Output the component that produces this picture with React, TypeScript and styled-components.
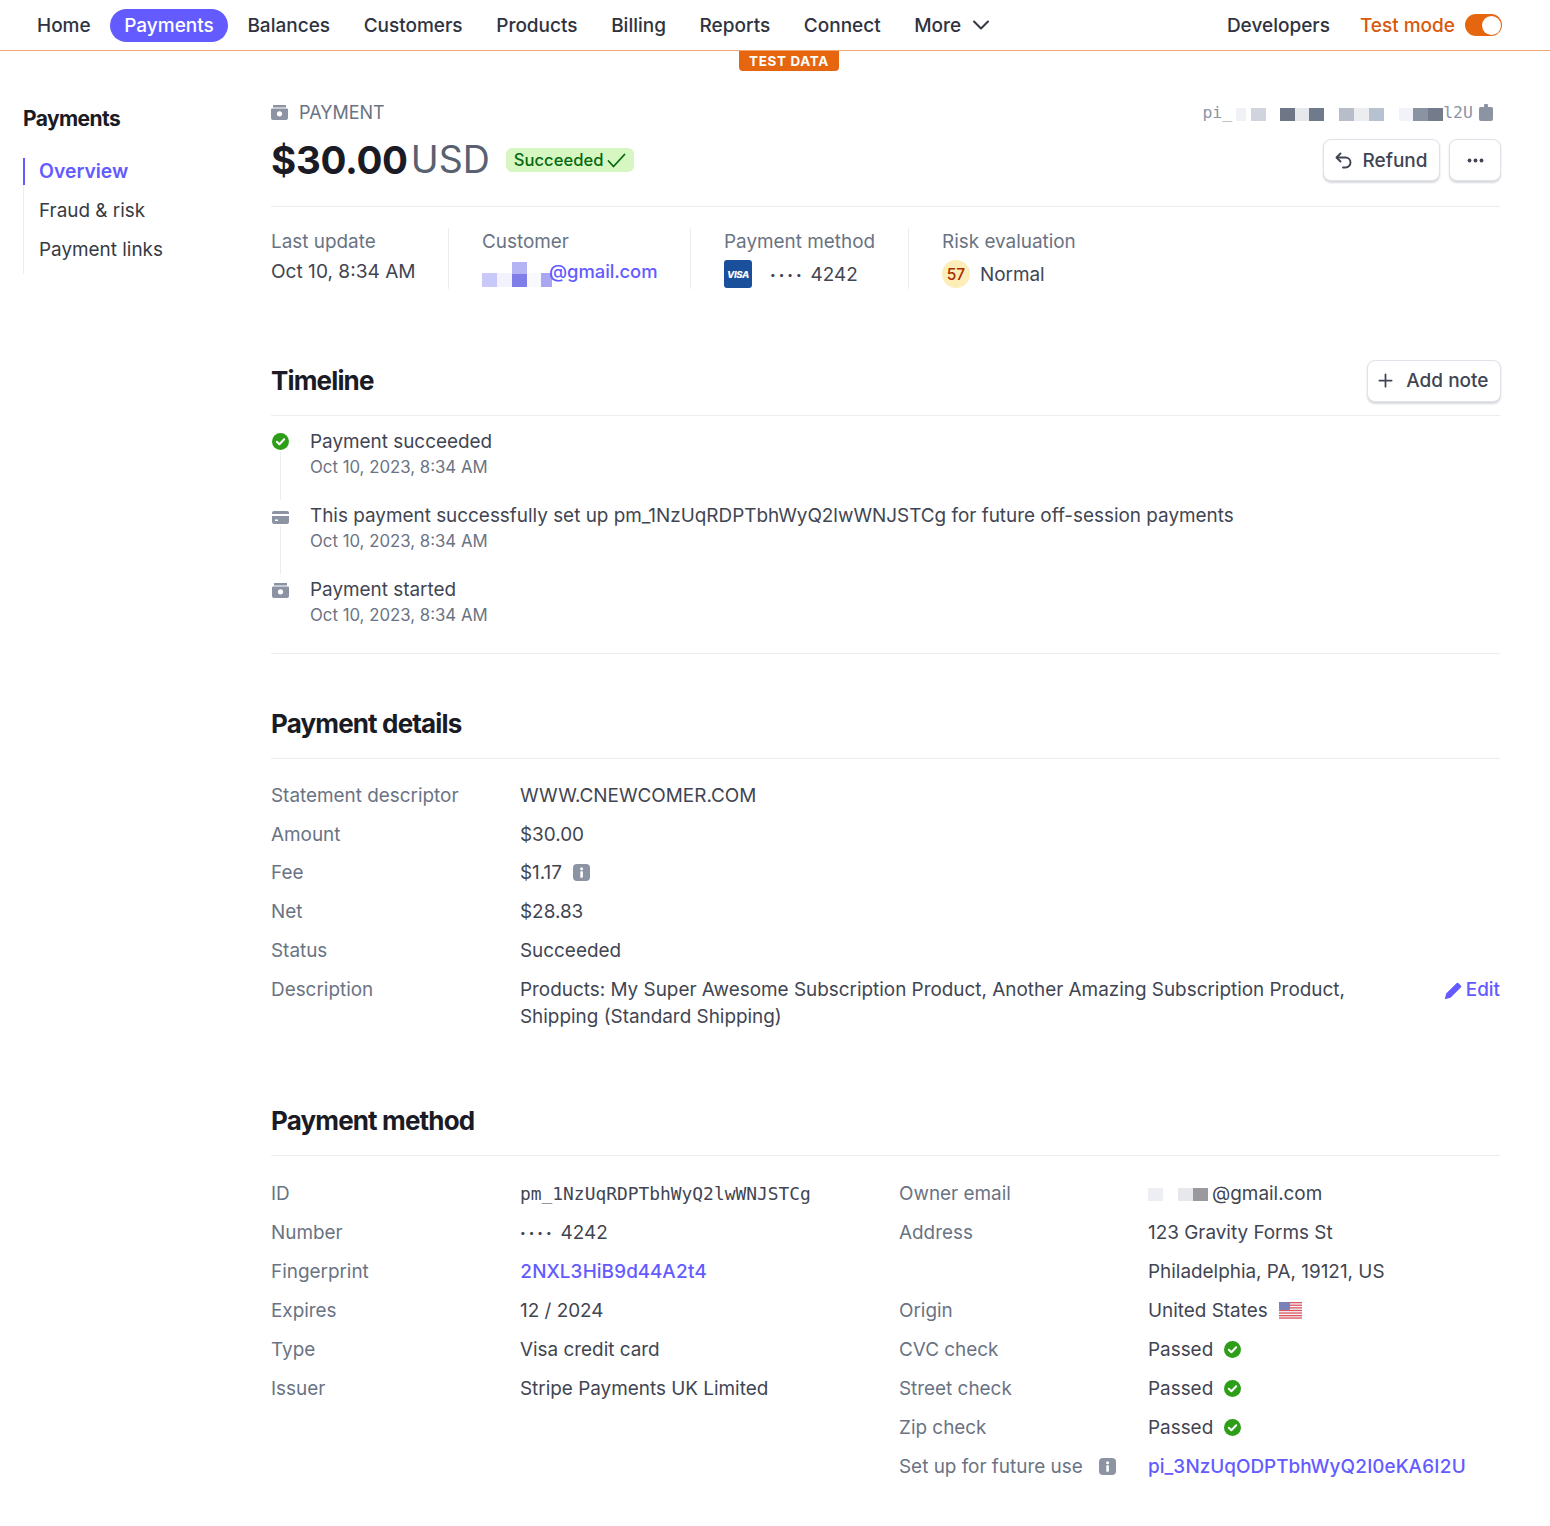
import React from 'react'
import styled, { createGlobalStyle } from 'styled-components'
import { ChevronDown, Plus } from 'lucide-react'

const GlobalStyle = createGlobalStyle`
  html, body {
    margin: 0;
    padding: 0;
    background: #fff;
    font-family: Inter, "Noto Sans", sans-serif;
    color: #414552;
    font-size: 18.9px;
    line-height: 27px;
  }
`

const purple = '#635bff'
const orange = '#e5660f'

const TopBar = styled.header`
  height: 50px;
  border-bottom: 1.5px solid #f2a672;
  display: flex;
  align-items: center;
  justify-content: space-between;
  padding: 0 48px 0 23px;
  position: relative;
  box-sizing: content-box;
`

const NavList = styled.nav`
  display: flex;
  align-items: center;
  gap: 5.6px;
`

const NavItem = styled.a<{ $active?: boolean }>`
  display: flex;
  align-items: center;
  gap: 6px;
  height: 33px;
  padding: 0 14px;
  border-radius: 17px;
  font-weight: 500;
  font-size: 19px;
  background: ${(p) => (p.$active ? purple : 'transparent')};
  color: ${(p) => (p.$active ? '#fff' : '#2f3340')};
`

const NavRight = styled.div`
  display: flex;
  align-items: center;
`

const NavPlain = styled.span`
  font-weight: 500;
  font-size: 19px;
  color: #2f3340;
  margin-right: 30px;
`

const TestLabel = styled.span`
  font-weight: 500;
  font-size: 19px;
  color: #d8590b;
  margin-right: 10px;
`

const Toggle = styled.span`
  width: 37px;
  height: 22px;
  border-radius: 11px;
  background: ${orange};
  position: relative;
  display: block;

  &::after {
    content: '';
    position: absolute;
    top: 1.5px;
    right: 1.5px;
    width: 19px;
    height: 19px;
    border-radius: 50%;
    background: #fff;
  }
`

const TestBadge = styled.span`
  position: absolute;
  left: 739px;
  top: 51px;
  width: 100px;
  height: 20px;
  background: ${orange};
  border-radius: 0 0 4px 4px;
  color: #fff;
  font-size: 13.4px;
  font-weight: 700;
  line-height: 21px;
  letter-spacing: 0.7px;
  text-align: center;
`

const Layout = styled.div`
  display: flex;
  padding: 0 50px 0 23px;
  height: 1474px;
`

const Side = styled.aside`
  width: 248px;
  flex: none;
  padding-top: 54px;
`

const SideTitle = styled.h2`
  margin: 0 0 25px;
  font-size: 21px;
  line-height: 28px;
  font-weight: 700;
  letter-spacing: -0.6px;
  color: #1a1b25;
`

const SideList = styled.div`
  border-left: 1.5px solid #ebeef1;
  padding-bottom: 11px;
  display: flex;
  flex-direction: column;
  gap: 12px;
`

const SideItem = styled.a<{ $active?: boolean }>`
  height: 27px;
  display: flex;
  align-items: center;
  padding-left: 14.5px;
  margin-left: -1.5px;
  border-left: 2.5px solid ${(p) => (p.$active ? purple : 'transparent')};
  font-size: ${(p) => (p.$active ? 19.4 : 18.9)}px;
  font-weight: ${(p) => (p.$active ? 600 : 400)};
  color: ${(p) => (p.$active ? purple : '#353a44')};
`

const Main = styled.main`
  flex: 1;
  min-width: 0;
`

const HeadTop = styled.div`
  display: flex;
  justify-content: space-between;
  align-items: center;
  padding-top: 48px;
  height: 27px;
  box-sizing: content-box;
`

const Eyebrow = styled.div`
  display: flex;
  align-items: center;
  gap: 11px;
  font-size: 18px;
  color: #6a7383;
`

const Identifier = styled.div`
  display: flex;
  align-items: center;
  font-family: "DejaVu Sans Mono", "Liberation Mono", monospace;
  font-size: 16.5px;
  color: #8c94a3;
  padding-right: 7px;
`

const IdentifierGap = styled.span`
  width: 6px;
`

const Mosaic = styled.span<{ $h: number; $y: number }>`
  display: inline-flex;
  align-items: stretch;
  height: ${(p) => p.$h}px;
  margin-top: ${(p) => p.$y}px;
`

const Tile = styled.span<{ $w: number; $c: string; $up?: number }>`
  display: block;
  width: ${(p) => p.$w}px;
  background: ${(p) => p.$c};
  margin-top: ${(p) => p.$up ?? 0}px;
`

const TitleRow = styled.div`
  display: flex;
  justify-content: space-between;
  align-items: center;
  margin-top: 12px;
  height: 44px;
  padding-bottom: 24px;
  border-bottom: 1.5px solid #ebeef1;
  box-sizing: content-box;
`

const AmountGroup = styled.div`
  display: flex;
  align-items: center;
`

const Amount = styled.span`
  font-size: 38.5px;
  line-height: 44px;
  font-weight: 700;
  letter-spacing: -0.3px;
  color: #1a1b25;
`

const Currency = styled.span`
  font-size: 37.5px;
  line-height: 44px;
  margin-left: 3px;
  color: #596171;
`

const StatusPill = styled.span`
  margin-left: 16px;
  height: 24px;
  display: inline-flex;
  align-items: center;
  gap: 4px;
  padding: 0 8px;
  border-radius: 6px;
  background: #d7f7c2;
  color: #05690d;
  font-size: 16.6px;
  font-weight: 500;
`

const ButtonRow = styled.div`
  display: flex;
  gap: 9px;
  margin-right: -1px;
`

const Button = styled.button<{ $wide?: boolean }>`
  height: 42px;
  display: flex;
  align-items: center;
  gap: 10px;
  padding: 0 ${(p) => (p.$wide ? 16.5 : 11.5)}px;
  background: #fff;
  border: 1px solid #dfe2e8;
  border-radius: 8px;
  box-shadow: 0 1.5px 2px rgba(60, 66, 87, 0.2);
  font: 500 19px/27px Inter, sans-serif;
  color: #414552;
`

const AddNoteButton = styled(Button)`
  padding-left: 7.5px;
`

const Summary = styled.div`
  display: flex;
  padding-top: 21px;
  height: 61px;
  box-sizing: content-box;
`

const SummaryCell = styled.div<{ $w: number }>`
  width: ${(p) => p.$w}px;
  flex: none;
  box-sizing: border-box;
  border-right: 1.5px solid #ebeef1;

  & + & {
    padding-left: 33px;
  }

  &:last-child {
    border-right: 0;
  }
`

const MutedLabel = styled.div`
  color: #6a7383;
  line-height: 27px;
`

const SummaryValue = styled.div<{ $drop?: number; $size?: number }>`
  display: flex;
  align-items: center;
  height: 32px;
  margin-top: ${(p) => p.$drop ?? 0}px;
  font-size: ${(p) => p.$size ?? 18.9}px;
  color: #414552;
`

const LinkText = styled.a`
  color: ${purple};
  font-weight: 500;
  font-variant-numeric: tabular-nums;
`

const CustomerLink = styled(LinkText)`
  margin-left: -3px;
  font-size: 18.4px;
`

const CardDots = styled.span`
  font-size: 10px;
  letter-spacing: 3px;
  margin-right: 6px;
  color: #414552;
`

const VisaMark = styled.span`
  width: 28px;
  height: 28px;
  border-radius: 3px;
  background: #1a4f9c;
  color: #fff;
  font-size: 9.5px;
  font-weight: 800;
  font-style: italic;
  letter-spacing: -0.3px;
  display: flex;
  align-items: center;
  justify-content: center;
  margin-right: 18px;
`

const ScoreDot = styled.span`
  width: 28px;
  height: 28px;
  border-radius: 50%;
  background: #fcedb9;
  color: #a82c00;
  font-size: 15.5px;
  font-weight: 500;
  display: flex;
  align-items: center;
  justify-content: center;
  margin-right: 10px;
`

const SectionHead = styled.div<{ $top: number; $h: number }>`
  display: flex;
  justify-content: space-between;
  align-items: center;
  margin-top: ${(p) => p.$top}px;
  height: ${(p) => p.$h}px;
  border-bottom: 1.5px solid #ebeef1;
`

const SectionTitle = styled.h2`
  margin: 0;
  font-size: 26px;
  line-height: 34px;
  font-weight: 700;
  letter-spacing: -0.85px;
  color: #1a1b25;
`

const Timeline = styled.div`
  padding-top: 12px;
  padding-bottom: 25px;
  border-bottom: 1.5px solid #ebeef1;
`

const Event = styled.div`
  display: flex;
  height: 74px;
  position: relative;

  &:last-child {
    height: 52px;
  }

  &:not(:last-child)::before {
    content: '';
    position: absolute;
    left: 8.5px;
    top: 24px;
    bottom: 2px;
    width: 1.5px;
    background: #ebeef1;
  }
`

const EventIcon = styled.span`
  width: 38px;
  margin-left: 1px;
  flex: none;
  padding-top: 2px;
  height: 18px;
  display: block;
`

const EventTitle = styled.div`
  color: #414552;
  line-height: 27px;
`

const EventTime = styled.div`
  color: #6a7383;
  font-size: 16.8px;
  line-height: 25px;
`

const Rows = styled.div<{ $top: number; $gap?: number }>`
  display: flex;
  flex-direction: column;
  padding-top: ${(p) => p.$top}px;
  row-gap: ${(p) => p.$gap ?? 0}px;
`

const Row = styled.div`
  display: grid;
  grid-template-columns: 249px 1fr;
  min-height: 38.8px;
`

const RowLabel = styled.div`
  display: flex;
  align-items: flex-start;
  gap: 16px;
  color: #6a7383;
  line-height: 38px;
  padding-top: 0.8px;
`

const LabelIcon = styled.span`
  margin-top: 2px;
  height: 17px;
`

const RowValue = styled.div<{ $mono?: boolean; $gap?: number }>`
  display: flex;
  align-items: center;
  gap: ${(p) => p.$gap ?? 11}px;
  min-height: 38.8px;
  color: #414552;
  ${(p) => p.$mono && 'font-family: "DejaVu Sans Mono", monospace; font-size: 17.9px;'}
`

const Description = styled.div`
  grid-column: 2;
  display: flex;
  justify-content: space-between;
  padding-top: 6px;
`

const DescriptionText = styled.div`
  width: 850px;
  color: #414552;
`

const EditLink = styled.a`
  display: flex;
  align-items: flex-start;
  gap: 4px;
  color: ${purple};
  font-weight: 500;
`

const PencilWrap = styled.span`
  margin-top: 4px;
  height: 18px;
`

const TwoColumns = styled.div`
  display: grid;
  grid-template-columns: 628px 1fr;
`

const FlagIcon = () => (
  <svg width="23" height="17" viewBox="0 0 23 17">
    <rect width="23" height="17" rx="2" fill="#f4f5f7" />
    {[0, 2.6, 5.2, 7.8, 10.4, 13, 15.4].map((y) => (
      <rect key={y} y={y} width="23" height="1.3" fill="#dd5560" />
    ))}
    <rect width="11" height="8" rx="1" fill="#7a80b8" />
  </svg>
)

const BoxIcon = () => (
  <svg width="17" height="15" viewBox="0 0 17 15">
    <path d="M2 0h13v2.5H2z" fill="#8c94a3" />
    <path fillRule="evenodd" d="M1 3.500h15a1 1 0 0 1 1 1V13a2 2 0 0 1-2 2H2a2 2 0 0 1-2-2V4.500a1 1 0 0 1 1-1zm7.500 2.700a2.600 2.600 0 1 0 0 5.200 2.600 2.600 0 0 0 0-5.200z" fill="#8c94a3" />
  </svg>
)

const CardIcon = () => (
  <svg width="17" height="13" viewBox="0 0 17 13">
    <path d="M2 0h13a2 2 0 0 1 2 2v1H0V2a2 2 0 0 1 2-2z" fill="#8c94a3" />
    <path fillRule="evenodd" d="M0 5h17v6a2 2 0 0 1-2 2H2a2 2 0 0 1-2-2V5zm3 3.500v1.500h3V8.500H3z" fill="#8c94a3" />
  </svg>
)

const CheckIcon = () => (
  <svg width="17" height="17" viewBox="0 0 17 17">
    <circle cx="8.5" cy="8.500" r="8.500" fill="#2e9e18" />
    <path d="M4.800 8.800l2.600 2.500 4.800-5" fill="none" stroke="#fff" strokeWidth="2" strokeLinecap="round" strokeLinejoin="round" />
  </svg>
)

const InfoIcon = () => (
  <svg width="17" height="17" viewBox="0 0 17 17">
    <rect width="17" height="17" rx="4" fill="#8c94a3" />
    <rect x="7.300" y="7.200" width="2.600" height="6.500" rx="0.600" fill="#fff" />
    <circle cx="8.600" cy="4.700" r="1.500" fill="#fff" />
  </svg>
)

const ClipIcon = () => (
  <svg width="14" height="17" viewBox="0 0 14 17">
    <path d="M5 1.500a2 2 0 0 1 4 0V3h3.500A1.500 1.500 0 0 1 14 4.500V15a2 2 0 0 1-2 2H2a2 2 0 0 1-2-2V4.500A1.500 1.500 0 0 1 1.500 3H5z" fill="#8c94a3" />
  </svg>
)

const RefundIcon = () => (
  <svg width="17" height="17" viewBox="0 0 17 17" fill="none" stroke="#414552" strokeWidth="1.900" strokeLinecap="round" strokeLinejoin="round">
    <path d="M5.500 1.500 1.500 5.500l4 4" />
    <path d="M2 5.500h8.500a5 5 0 0 1 0 10H8" />
  </svg>
)

const DotsIcon = () => (
  <svg width="17" height="5" viewBox="0 0 17 5" fill="#414552">
    <circle cx="2.500" cy="2.500" r="1.900" />
    <circle cx="8.500" cy="2.500" r="1.900" />
    <circle cx="14.500" cy="2.500" r="1.900" />
  </svg>
)

const TickIcon = () => (
  <svg width="19" height="15" viewBox="0 0 19 15" fill="none" stroke="#05690d" strokeWidth="1.800" strokeLinecap="round" strokeLinejoin="round">
    <path d="M1.500 8l5 5.500L17.500 1.500" />
  </svg>
)

const PencilIcon = () => (
  <svg width="18" height="18" viewBox="0 0 18 18">
    <path d="M12.500 1.200a1.500 1.500 0 0 1 2.100 0l2.200 2.200a1.500 1.500 0 0 1 0 2.100L6.500 15.800.8 17.200l1.400-5.700z" fill={purple} />
  </svg>
)

type TileSpec = [number, string, number?]

const Blur = ({ tiles, height = 13, y = 0 }: { tiles: TileSpec[]; height?: number; y?: number }) => (
  <Mosaic $h={height} $y={y}>
    {tiles.map(([w, c, up], i) => (
      <Tile key={i} $w={w} $c={c} $up={up} />
    ))}
  </Mosaic>
)

const navItems = ['Home', 'Payments', 'Balances', 'Customers', 'Products', 'Billing', 'Reports', 'Connect']

const events = [
  { icon: <CheckIcon />, title: 'Payment succeeded' },
  {
    icon: <CardIcon />,
    title: 'This payment successfully set up pm_1NzUqRDPTbhWyQ2lwWNJSTCg for future off-session payments',
  },
  { icon: <BoxIcon />, title: 'Payment started' },
]

const Passed = () => (
  <RowValue>
    Passed <CheckIcon />
  </RowValue>
)

export default function App() {
  return (
    <>
      <GlobalStyle />
      <TopBar>
        <NavList>
          {navItems.map((item) => (
            <NavItem key={item} $active={item === 'Payments'}>
              {item}
            </NavItem>
          ))}
          <NavItem>
            More <ChevronDown size={28} strokeWidth={1.8} color="#353a44" />
          </NavItem>
        </NavList>
        <NavRight>
          <NavPlain>Developers</NavPlain>
          <TestLabel>Test mode</TestLabel>
          <Toggle />
        </NavRight>
        <TestBadge>TEST DATA</TestBadge>
      </TopBar>

      <Layout>
        <Side>
          <SideTitle>Payments</SideTitle>
          <SideList>
            <SideItem $active>Overview</SideItem>
            <SideItem>Fraud &amp; risk</SideItem>
            <SideItem>Payment links</SideItem>
          </SideList>
        </Side>

        <Main>
          <HeadTop>
            <Eyebrow>
              <BoxIcon />
              PAYMENT
            </Eyebrow>
            <Identifier>
              pi_
              <Blur
                y={3}
                tiles={[
                  [4, '#fff'],
                  [10, '#f0f1f5'],
                  [5, '#fff'],
                  [15, '#d0d4dd'],
                  [14, '#fff'],
                  [15, '#6f7686'],
                  [14, '#e6e8ec'],
                  [15, '#6f7a8c'],
                  [15, '#fff'],
                  [15, '#b7bdc9'],
                  [15, '#ecedef'],
                  [15, '#b6c2d0'],
                  [15, '#fff'],
                  [14, '#f1f3f8'],
                  [15, '#8a93a2'],
                  [15, '#747c8c'],
                ]}
              />
              l2U
              <IdentifierGap />
              <ClipIcon />
            </Identifier>
          </HeadTop>

          <TitleRow>
            <AmountGroup>
              <Amount>$30.00</Amount>
              <Currency>USD</Currency>
              <StatusPill>
                Succeeded
                <TickIcon />
              </StatusPill>
            </AmountGroup>
            <ButtonRow>
              <Button>
                <RefundIcon />
                Refund
              </Button>
              <Button $wide>
                <DotsIcon />
              </Button>
            </ButtonRow>
          </TitleRow>

          <Summary>
            <SummaryCell $w={178}>
              <MutedLabel>Last update</MutedLabel>
              <SummaryValue $size={19.1}>Oct 10, 8:34 AM</SummaryValue>
            </SummaryCell>
            <SummaryCell $w={242}>
              <MutedLabel>Customer</MutedLabel>
              <SummaryValue>
                <Blur
                  height={25}
                  y={7}
                  tiles={[
                    [15, '#c8c8fb', 11],
                    [15, '#f3f3fe', 11],
                    [15, 'linear-gradient(#b4b3f3 50%, #7f7de8 50%)'],
                    [14, '#f8f8ff', 11],
                    [11, '#a9a6f2', 11],
                  ]}
                />
                <CustomerLink>@gmail.com</CustomerLink>
              </SummaryValue>
            </SummaryCell>
            <SummaryCell $w={218}>
              <MutedLabel>Payment method</MutedLabel>
              <SummaryValue $drop={3}>
                <VisaMark>VISA</VisaMark>
                <CardDots>••••</CardDots>
                4242
              </SummaryValue>
            </SummaryCell>
            <SummaryCell $w={300}>
              <MutedLabel>Risk evaluation</MutedLabel>
              <SummaryValue $drop={3}>
                <ScoreDot>57</ScoreDot>
                Normal
              </SummaryValue>
            </SummaryCell>
          </Summary>

          <SectionHead $top={57} $h={69}>
            <SectionTitle>Timeline</SectionTitle>
            <ButtonRow>
              <AddNoteButton>
                <Plus size={21} strokeWidth={2} color="#414552" />
                Add note
              </AddNoteButton>
            </ButtonRow>
          </SectionHead>
          <Timeline>
            {events.map((event) => (
              <Event key={event.title}>
                <EventIcon>{event.icon}</EventIcon>
                <div>
                  <EventTitle>{event.title}</EventTitle>
                  <EventTime>Oct 10, 2023, 8:34 AM</EventTime>
                </div>
              </Event>
            ))}
          </Timeline>

          <SectionHead $top={36} $h={68}>
            <SectionTitle>Payment details</SectionTitle>
          </SectionHead>
          <Rows $top={17}>
            <Row>
              <RowLabel>Statement descriptor</RowLabel>
              <RowValue>WWW.CNEWCOMER.COM</RowValue>
            </Row>
            <Row>
              <RowLabel>Amount</RowLabel>
              <RowValue>$30.00</RowValue>
            </Row>
            <Row>
              <RowLabel>Fee</RowLabel>
              <RowValue>
                $1.17 <InfoIcon />
              </RowValue>
            </Row>
            <Row>
              <RowLabel>Net</RowLabel>
              <RowValue>$28.83</RowValue>
            </Row>
            <Row>
              <RowLabel>Status</RowLabel>
              <RowValue>Succeeded</RowValue>
            </Row>
            <Row>
              <RowLabel>Description</RowLabel>
              <Description>
                <DescriptionText>
                  Products: My Super Awesome Subscription Product, Another Amazing Subscription Product,
                  Shipping (Standard Shipping)
                </DescriptionText>
                <EditLink>
                  <PencilWrap>
                    <PencilIcon />
                  </PencilWrap>
                  Edit
                </EditLink>
              </Description>
            </Row>
          </Rows>

          <SectionHead $top={57} $h={68}>
            <SectionTitle>Payment method</SectionTitle>
          </SectionHead>
          <TwoColumns>
            <Rows $top={18} $gap={0.2}>
              <Row>
                <RowLabel>ID</RowLabel>
                <RowValue $mono>pm_1NzUqRDPTbhWyQ2lwWNJSTCg</RowValue>
              </Row>
              <Row>
                <RowLabel>Number</RowLabel>
                <RowValue $gap={0}>
                  <CardDots>••••</CardDots>
                  4242
                </RowValue>
              </Row>
              <Row>
                <RowLabel>Fingerprint</RowLabel>
                <RowValue>
                  <LinkText>2NXL3HiB9d44A2t4</LinkText>
                </RowValue>
              </Row>
              <Row>
                <RowLabel>Expires</RowLabel>
                <RowValue>12 / 2024</RowValue>
              </Row>
              <Row>
                <RowLabel>Type</RowLabel>
                <RowValue>Visa credit card</RowValue>
              </Row>
              <Row>
                <RowLabel>Issuer</RowLabel>
                <RowValue>Stripe Payments UK Limited</RowValue>
              </Row>
            </Rows>
            <Rows $top={18} $gap={0.2}>
              <Row>
                <RowLabel>Owner email</RowLabel>
                <RowValue $gap={4}>
                  <Blur
                    y={3}
                    tiles={[
                      [15, '#eceef3'],
                      [15, '#fff'],
                      [15, '#e7e8ec'],
                      [15, '#9a9a9e'],
                    ]}
                  />
                  @gmail.com
                </RowValue>
              </Row>
              <Row>
                <RowLabel>Address</RowLabel>
                <RowValue>123 Gravity Forms St</RowValue>
              </Row>
              <Row>
                <RowLabel />
                <RowValue>Philadelphia, PA, 19121, US</RowValue>
              </Row>
              <Row>
                <RowLabel>Origin</RowLabel>
                <RowValue>
                  United States <FlagIcon />
                </RowValue>
              </Row>
              <Row>
                <RowLabel>CVC check</RowLabel>
                <Passed />
              </Row>
              <Row>
                <RowLabel>Street check</RowLabel>
                <Passed />
              </Row>
              <Row>
                <RowLabel>Zip check</RowLabel>
                <Passed />
              </Row>
              <Row>
                <RowLabel>
                  Set up for future use
                  <LabelIcon>
                    <InfoIcon />
                  </LabelIcon>
                </RowLabel>
                <RowValue>
                  <LinkText>pi_3NzUqODPTbhWyQ2I0eKA6I2U</LinkText>
                </RowValue>
              </Row>
            </Rows>
          </TwoColumns>
        </Main>
      </Layout>
    </>
  )
}
